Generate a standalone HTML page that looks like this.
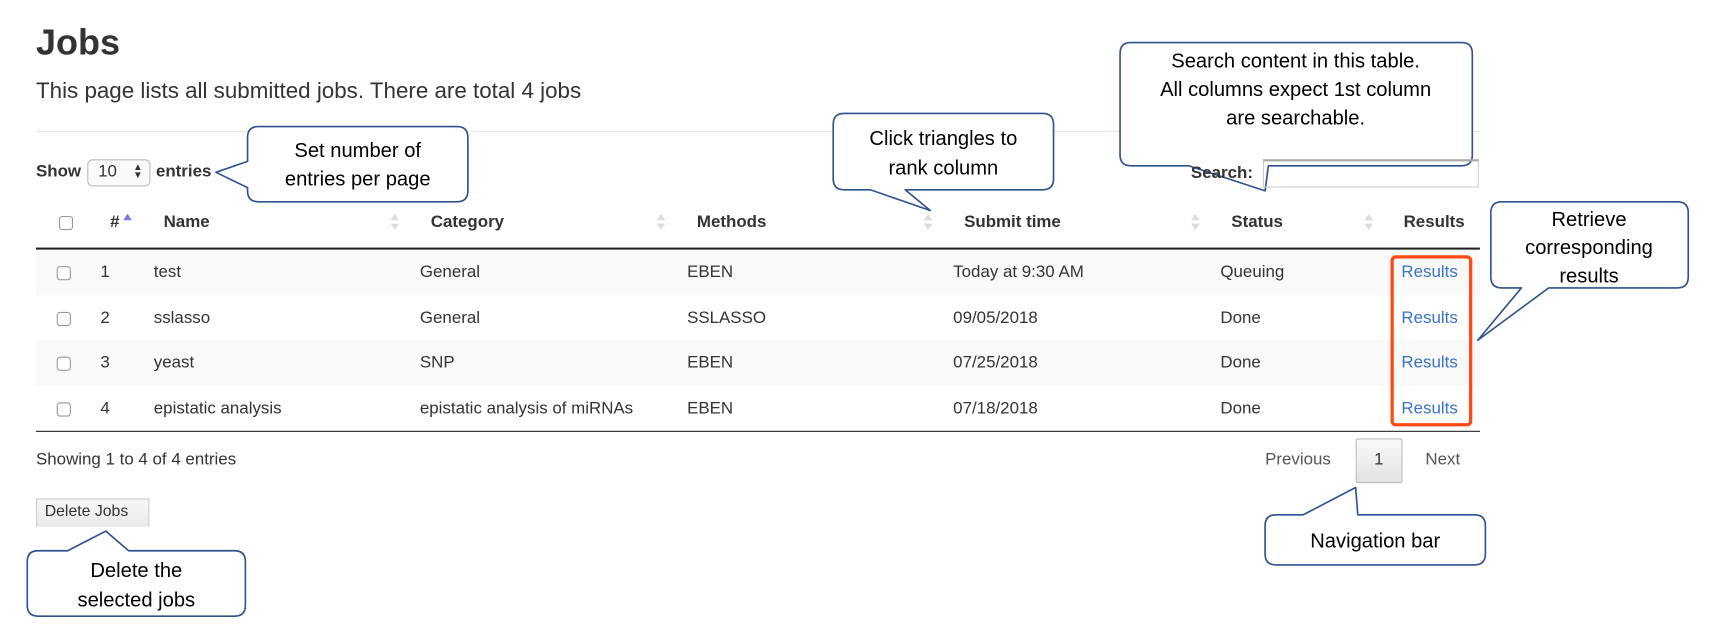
<!DOCTYPE html>
<html><head><meta charset="utf-8"><style>
html,body{margin:0;padding:0;background:#fff;width:1710px;height:629px;overflow:hidden}
#c{position:absolute;left:0;top:0;width:1568px;height:577px;transform:scale(1.0906);transform-origin:0 0;font-family:"Liberation Sans",Arial,sans-serif;color:#333}
.a{position:absolute;white-space:nowrap}
.b{font-weight:bold;font-size:15.5px}
.t{font-size:15.5px}
.cb{position:absolute;width:11px;height:11px;border:1px solid #999;border-radius:3px;background:#fff}
.row{position:absolute;left:33px;width:1324px;height:42px}
.s{position:absolute;width:0;height:0;border-left:4px solid transparent;border-right:4px solid transparent}
.lnk{color:#3a72c4}
.co{font-family:"Liberation Sans",sans-serif;font-size:18.5px;fill:#000}
.top{z-index:2}
</style></head><body><div id="c">
<div class="a" style="left:33px;top:20px;font-size:33px;font-weight:bold;color:#333">Jobs</div>
<div class="a" style="left:33px;top:72px;font-size:20.5px">This page lists all submitted jobs. There are total 4 jobs</div>
<div class="a" style="left:33px;top:120px;width:1324px;height:1px;background:#e8e8e8"></div>
<div class="a b" style="left:33px;top:149px">Show</div>
<div class="a" style="left:80px;top:146px;width:56px;height:23px;border:1px solid #bbb;border-radius:5px;background:#fafafa"></div>
<div class="a t" style="left:90px;top:149px">10</div>
<div class="a" style="left:122px;top:150px;font-size:9px;line-height:7px">▲<br>▼</div>
<div class="a b" style="left:143px;top:149px">entries</div>
<div class="a b top" style="left:1092px;top:150px">Search:</div>
<div class="a top" style="left:1158px;top:146px;width:198px;height:26px;border:1px solid #ccc;border-top:2px solid #aaa;box-sizing:border-box"></div>

<div class="cb" style="left:54px;top:198px"></div>
<div class="a b" style="left:101px;top:195px">#</div>
<div class="s" style="left:113px;top:196px;border-bottom:6px solid #7b7bdc"></div>
<div class="a b" style="left:150px;top:195px">Name</div>
<div class="a b" style="left:395px;top:195px">Category</div>
<div class="a b" style="left:639px;top:195px">Methods</div>
<div class="a b" style="left:884px;top:195px">Submit time</div>
<div class="a b" style="left:1129px;top:195px">Status</div>
<div class="a b" style="left:1287px;top:195px">Results</div>
<div class="s" style="left:358px;top:196px;border-bottom:6px solid #ddd"></div><div class="s" style="left:358px;top:205px;border-top:6px solid #ddd"></div>
<div class="s" style="left:602px;top:196px;border-bottom:6px solid #ddd"></div><div class="s" style="left:602px;top:205px;border-top:6px solid #ddd"></div>
<div class="s" style="left:847px;top:196px;border-bottom:6px solid #ddd"></div><div class="s" style="left:847px;top:205px;border-top:6px solid #ddd"></div>
<div class="s" style="left:1092px;top:196px;border-bottom:6px solid #ddd"></div><div class="s" style="left:1092px;top:205px;border-top:6px solid #ddd"></div>
<div class="s" style="left:1251px;top:196px;border-bottom:6px solid #ddd"></div><div class="s" style="left:1251px;top:205px;border-top:6px solid #ddd"></div>
<div class="a" style="left:33px;top:227px;width:1324px;height:2px;background:#222"></div>

<div class="row" style="top:229px;background:#f9f9f9"></div>
<div class="row" style="top:312px;background:#f9f9f9"></div>
<div class="a" style="left:33px;top:395px;width:1324px;height:1px;background:#222"></div>

<div class="cb" style="left:52px;top:244px"></div><div class="a t" style="left:92px;top:241px">1</div><div class="a t" style="left:141px;top:241px">test</div><div class="a t" style="left:385px;top:241px">General</div><div class="a t" style="left:630px;top:241px">EBEN</div><div class="a t" style="left:874px;top:241px">Today at 9:30 AM</div><div class="a t" style="left:1119px;top:241px">Queuing</div><div class="a t lnk" style="left:1285px;top:241px">Results</div>
<div class="cb" style="left:52px;top:286px"></div><div class="a t" style="left:92px;top:283px">2</div><div class="a t" style="left:141px;top:283px">sslasso</div><div class="a t" style="left:385px;top:283px">General</div><div class="a t" style="left:630px;top:283px">SSLASSO</div><div class="a t" style="left:874px;top:283px">09/05/2018</div><div class="a t" style="left:1119px;top:283px">Done</div><div class="a t lnk" style="left:1285px;top:283px">Results</div>
<div class="cb" style="left:52px;top:327px"></div><div class="a t" style="left:92px;top:324px">3</div><div class="a t" style="left:141px;top:324px">yeast</div><div class="a t" style="left:385px;top:324px">SNP</div><div class="a t" style="left:630px;top:324px">EBEN</div><div class="a t" style="left:874px;top:324px">07/25/2018</div><div class="a t" style="left:1119px;top:324px">Done</div><div class="a t lnk" style="left:1285px;top:324px">Results</div>
<div class="cb" style="left:52px;top:369px"></div><div class="a t" style="left:92px;top:366px">4</div><div class="a t" style="left:141px;top:366px">epistatic analysis</div><div class="a t" style="left:385px;top:366px">epistatic analysis of miRNAs</div><div class="a t" style="left:630px;top:366px">EBEN</div><div class="a t" style="left:874px;top:366px">07/18/2018</div><div class="a t" style="left:1119px;top:366px">Done</div><div class="a t lnk" style="left:1285px;top:366px">Results</div>

<div class="a" style="left:1275px;top:234px;width:69px;height:151px;border:3px solid #ff4a14;border-radius:5px"></div>

<div class="a t" style="left:33px;top:413px">Showing 1 to 4 of 4 entries</div>
<div class="a t" style="left:1160px;top:413px;color:#555">Previous</div>
<div class="a" style="left:1243px;top:402px;width:43px;height:41px;border:1px solid #bbb;border-radius:2px;background:linear-gradient(#fafafa,#e2e2e2);box-sizing:border-box"></div>
<div class="a t" style="left:1260px;top:413px">1</div>
<div class="a t" style="left:1307px;top:413px;color:#555">Next</div>
<div class="a" style="left:33px;top:457px;width:104px;height:26px;border:1px solid #ccc;border-bottom:none;background:linear-gradient(#f7f7f7,#eaeaea);box-sizing:border-box"></div>
<div class="a" style="left:41px;top:461px;font-size:14.5px">Delete Jobs</div>

<svg class="a" style="left:0;top:0;z-index:1" width="1568" height="577" viewBox="0 0 1568 577">
<g fill="#fff" stroke="#2f528f" stroke-width="1.5" stroke-linejoin="round">
<path d="M237,116 H419 Q429,116 429,126 V175 Q429,185 419,185 H237 Q227,185 227,175 V172 L198,158 L227,148 V126 Q227,116 237,116 Z"/>
<path d="M774,104 H956 Q966,104 966,114 V164 Q966,174 956,174 H830 L853,193 L798,174 H774 Q764,174 764,164 V114 Q764,104 774,104 Z"/>
<path d="M1037,39 H1340 Q1350,39 1350,49 V142 Q1350,152 1340,152 H1163 L1160,175 L1090,152 H1037 Q1027,152 1027,142 V49 Q1027,39 1037,39 Z"/>
<path d="M1377,185 H1538 Q1548,185 1548,195 V254 Q1548,264 1538,264 H1420 L1355,312 L1395,264 H1377 Q1367,264 1367,254 V195 Q1367,185 1377,185 Z"/>
<path d="M1170,472 H1195 L1243,447 L1245,472 H1352 Q1362,472 1362,482 V508 Q1362,518 1352,518 H1170 Q1160,518 1160,508 V482 Q1160,472 1170,472 Z"/>
<path d="M35,505 H62 L97,487 L118,505 H215 Q225,505 225,515 V555 Q225,565 215,565 H35 Q25,565 25,555 V515 Q25,505 35,505 Z"/>
</g>
<g class="co" text-anchor="middle">
<text x="328" y="144">Set number of</text><text x="328" y="170">entries per page</text>
<text x="865" y="133">Click triangles to</text><text x="865" y="160">rank column</text>
<text x="1188" y="62">Search content in this table.</text><text x="1188" y="88">All columns expect 1st column</text><text x="1188" y="114">are searchable.</text>
<text x="1457" y="207">Retrieve</text><text x="1457" y="233">corresponding</text><text x="1457" y="259">results</text>
<text x="1261" y="502">Navigation bar</text>
<text x="125" y="529">Delete the</text><text x="125" y="556">selected jobs</text>
</g>
</svg>
</div></body></html>
